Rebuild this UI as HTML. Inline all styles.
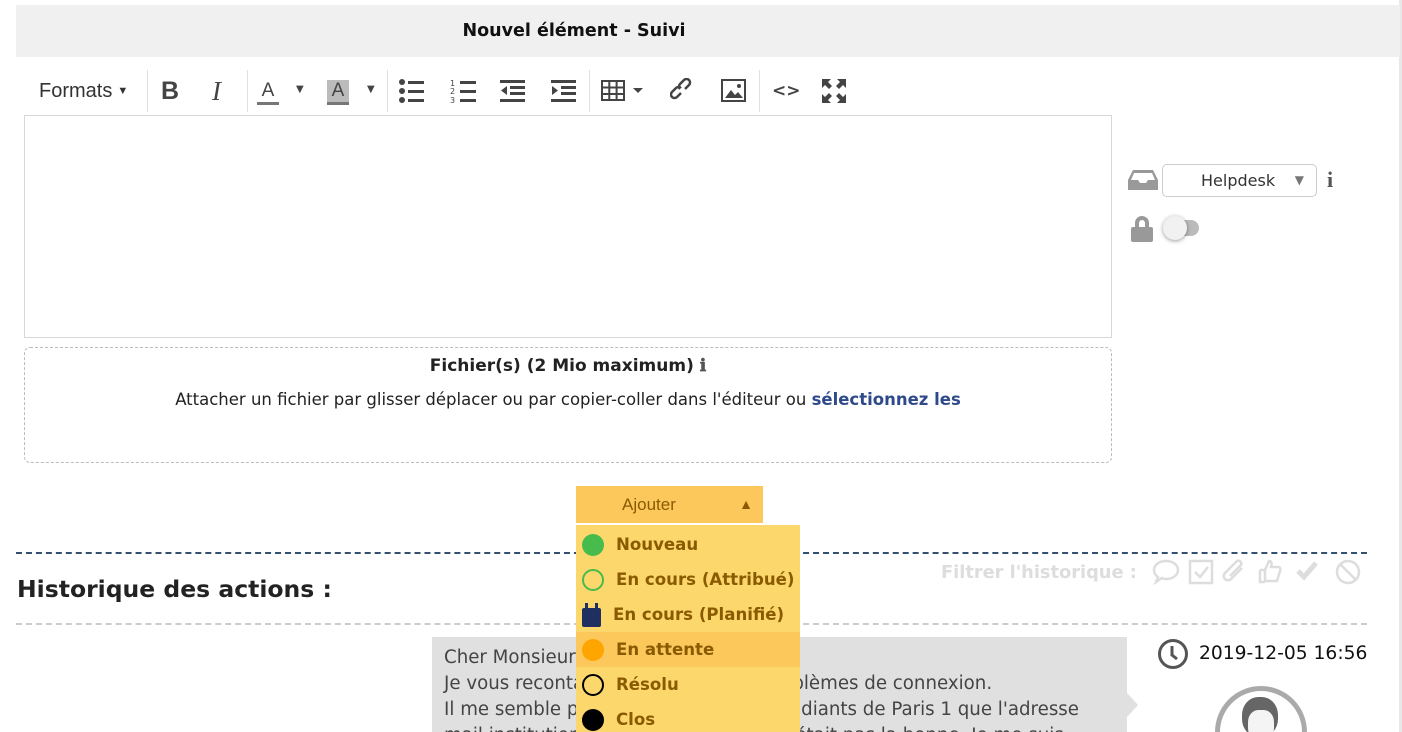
<!DOCTYPE html>
<html><head><meta charset="utf-8"><style>
*{box-sizing:border-box;margin:0;padding:0}
html,body{width:1402px;height:732px;overflow:hidden}
body{background:#fff;font-family:"DejaVu Sans","Liberation Sans",sans-serif;color:#222}
#w{position:relative;width:1402px;height:732px;overflow:hidden}
.a{position:absolute}
.tb{top:70px;height:42px;display:flex;align-items:center;color:#444}
.sep{position:absolute;top:70px;width:1px;height:42px;background:#e0e0e0}
.dd li{list-style:none;height:35px;display:flex;align-items:center;padding-left:6px;font-weight:bold;font-size:16.6px;color:#8a5a00;white-space:nowrap}
.dot{width:22px;height:22px;border-radius:50%;margin-right:12px;flex:none}
</style></head><body><div id="w">
<div class="a" style="left:1399px;top:0;width:3px;height:732px;background:#e8e8e8"></div>
<div class="a" style="left:16px;top:5px;width:1384px;height:52px;background:#f0f0f0;text-align:center;line-height:52px;font-weight:bold;font-size:17.5px;color:#111;padding-right:268px">Nouvel élément - Suivi</div>

<div class="a tb" style="left:39px;font-family:'Liberation Sans',sans-serif;font-size:20px;color:#333">Formats <span style="font-size:11px;margin-left:5px">▼</span></div>
<div class="sep" style="left:147px"></div>
<div class="a tb" style="left:161px;font-family:'Liberation Sans';font-weight:bold;font-size:25px">B</div>
<div class="a tb" style="left:212px;font-family:'Liberation Serif';font-style:italic;font-size:27px">I</div>
<div class="sep" style="left:247px"></div>
<div class="a" style="left:257px;top:80px;font-family:'Liberation Sans';font-size:19px;color:#444;border-bottom:3px solid #777;width:22px;text-align:center;line-height:22px">A</div>
<div class="a" style="left:296px;top:84px;font-size:10px;color:#444">▼</div>
<div class="a" style="left:327px;top:80px;font-family:'Liberation Sans';font-size:19px;color:#444;background:#bbb;border-bottom:3px solid #777;width:22px;text-align:center;line-height:22px">A</div>
<div class="a" style="left:367px;top:84px;font-size:10px;color:#444">▼</div>
<div class="sep" style="left:387px"></div>
<svg class="a" style="left:398px;top:78px" width="28" height="26" fill="#444"><circle cx="4" cy="4" r="3"/><circle cx="4" cy="13" r="3"/><circle cx="4" cy="22" r="3"/><rect x="10" y="3" width="16" height="3"/><rect x="10" y="12" width="16" height="3"/><rect x="10" y="21" width="16" height="3"/></svg>
<svg class="a" style="left:450px;top:78px" width="28" height="26" fill="#444"><text x="0" y="8" font-size="8">1</text><text x="0" y="16" font-size="8">2</text><text x="0" y="25" font-size="8">3</text><rect x="10" y="3" width="16" height="3"/><rect x="10" y="12" width="16" height="3"/><rect x="10" y="21" width="16" height="3"/></svg>
<svg class="a" style="left:500px;top:78px" width="26" height="26" fill="#444"><rect x="0" y="2" width="25" height="3"/><rect x="10" y="8" width="15" height="3"/><rect x="10" y="14" width="15" height="3"/><rect x="0" y="21" width="25" height="3"/><path d="M7 8v9l-6-4.5z"/></svg>
<svg class="a" style="left:551px;top:78px" width="26" height="26" fill="#444"><rect x="0" y="2" width="25" height="3"/><rect x="10" y="8" width="15" height="3"/><rect x="10" y="14" width="15" height="3"/><rect x="0" y="21" width="25" height="3"/><path d="M1 8v9l6-4.5z"/></svg>
<div class="sep" style="left:589px"></div>
<svg class="a" style="left:601px;top:80px" width="44" height="22" fill="none" stroke="#444" stroke-width="2"><rect x="1" y="1" width="22" height="19"/><path d="M1 7.5h22M1 14h22M8.3 1v19M15.6 1v19"/><path d="M32 8h10l-5 5z" fill="#444" stroke="none"/></svg>
<svg class="a" style="left:670px;top:78px" width="26" height="26" fill="none" stroke="#444" stroke-width="2.5"><path d="M11 15l-4 4a3.5 3.5 0 0 1-5-5l4-4a3.5 3.5 0 0 1 5 0"/><path d="M15 11l4-4a3.5 3.5 0 0 0-5-5l-4 4a3.5 3.5 0 0 0 0 5"/></svg>
<svg class="a" style="left:721px;top:79px" width="26" height="24"><rect x="1" y="1" width="23" height="21" fill="none" stroke="#444" stroke-width="2"/><path d="M4 19l6-8 4 5 3-3 5 6z" fill="#444"/><circle cx="18" cy="7" r="2" fill="#444"/></svg>
<div class="sep" style="left:759px"></div>
<div class="a tb" style="left:772px;font-size:17px;font-weight:bold;color:#444">&lt;&gt;</div>
<svg class="a" style="left:821px;top:78px" width="26" height="26" fill="#444"><path d="M1 1h9l-3 3 4 4-3 3-4-4-3 3zM25 1v9l-3-3-4 4-3-3 4-4-3-3zM1 25v-9l3 3 4-4 3 3-4 4 3 3zM25 25h-9l3-3-4-4 3-3 4 4 3-3z"/></svg>

<div class="a" style="left:24px;top:115px;width:1088px;height:223px;border:1px solid #d8d8d8"></div>
<div class="a" style="left:24px;top:347px;width:1088px;height:116px;border:1px dashed #bbb;border-radius:6px;text-align:center;font-size:16.5px;color:#222;white-space:nowrap">
<div style="margin-top:8px;font-weight:bold;font-size:17px">Fichier(s) (2 Mio maximum) <span style="color:#555;font-family:'Liberation Serif'">ℹ</span></div>
<div style="margin-top:14px">Attacher un fichier par glisser déplacer ou par copier-coller dans l'éditeur ou <b style="color:#2f4a8a">sélectionnez les</b></div></div>

<svg class="a" style="left:1128px;top:169px" width="30" height="22" fill="#999"><path d="M5 1h20l5 10v10H0V11z"/><path d="M6 4h18l3 7h-7l-2 3h-6l-2-3H3z" fill="#fff"/></svg>
<div class="a" style="left:1162px;top:164px;width:155px;height:33px;border:1px solid #ccc;border-radius:5px;font-size:16px;line-height:31px;padding-left:38px;color:#333">Helpdesk<span style="position:absolute;right:12px;color:#777;font-size:12px">▼</span></div>
<div class="a" style="left:1327px;top:167px;font-family:'Liberation Serif';font-weight:bold;font-size:22px;color:#555">i</div>
<svg class="a" style="left:1130px;top:215px" width="24" height="28" fill="#999"><path d="M5 12V8a7 7 0 0 1 14 0v4h-4V8a3 3 0 0 0-6 0v4z"/><rect x="1" y="12" width="22" height="15" rx="2"/></svg>
<div class="a" style="left:1166px;top:220px;width:33px;height:16px;border-radius:8px;background:#bbb"></div>
<div class="a" style="left:1163px;top:216px;width:24px;height:24px;border-radius:50%;background:#f1f1f1;box-shadow:0 1px 4px rgba(0,0,0,.4)"></div>

<div class="a" style="left:16px;top:552px;width:1351px;border-top:2px dashed #34506e"></div>
<div class="a" style="left:17px;top:575px;font-weight:bold;font-size:23.5px;color:#222;white-space:nowrap">Historique des actions :</div>
<div class="a" style="left:941px;top:562px;font-weight:bold;font-size:17.8px;color:#ddd;white-space:nowrap">Filtrer l'historique :</div>
<svg class="a" style="left:1152px;top:558px" width="210" height="28" fill="none" stroke="#ddd" stroke-width="2.5"><path d="M14 3c7 0 12 4 12 9s-5 9-12 9c-2 0-3 0-4-1l-6 4 2-5c-3-2-4-4-4-7 0-5 5-9 12-9z"/><rect x="38" y="3" width="22" height="22"/><path d="M43 14l5 5 8-10"/><path d="M90 10l-11 11a4 4 0 0 1-6-6l12-12a3 3 0 0 1 4 4l-11 11"/><path d="M108 12h5l4-9c3 0 3 3 2 6h7c2 0 3 2 2 4l-3 10h-12v-11zM108 12v12h5"/><path d="M146 13l6 6 12-14" stroke-width="5"/><circle cx="196" cy="14" r="11"/><path d="M188 6l16 16"/></svg>
<div class="a" style="left:16px;top:623px;width:1351px;border-top:2px dashed #ccc"></div>

<div class="a" style="left:432px;top:637px;width:695px;height:95px;background:#e0e0e0;font-size:18.2px;line-height:26px;color:#444;padding:8px 12px;white-space:nowrap;overflow:hidden">Cher Monsieur,<br>Je vous recontacte au sujet de vos problèmes de connexion.<br>Il me semble pourtant avoir dit aux étudiants de Paris 1 que l'adresse<br>mail institutionnelle qu'ils utilisaient n'était pas la bonne. Je me suis</div>
<div class="a" style="left:1127px;top:693px;width:0;height:0;border-top:12px solid transparent;border-bottom:12px solid transparent;border-left:11px solid #e0e0e0"></div>
<svg class="a" style="left:1157px;top:638px" width="32" height="32" fill="none" stroke="#555" stroke-width="3"><circle cx="16" cy="16" r="13.5"/><path d="M15 8v9l5 4"/></svg>
<div class="a" style="left:1199px;top:643px;font-size:18.7px;color:#111;white-space:nowrap">2019-12-05 16:56</div>
<div class="a" style="left:1215px;top:686px;width:92px;height:46px;overflow:hidden">
<div style="position:absolute;left:0;top:0;width:92px;height:92px;border-radius:50%;border:5px solid #aaa"></div>
<div style="position:absolute;left:27px;top:11px;width:36px;height:40px;border-radius:45%;background:#666"></div>
<div style="position:absolute;left:33px;top:24px;width:26px;height:30px;border-radius:40%;background:#f4f4f4"></div>
</div>

<div class="a" style="left:576px;top:486px;width:187px;height:37px;background:#fcc85c;color:#8a5a00;font-family:'Liberation Sans',sans-serif;font-size:17px;line-height:37px;padding-left:46px">Ajouter<span style="position:absolute;right:10px;font-size:14px">▲</span></div>
<ul class="a dd" style="left:576px;top:525px;width:224px;height:207px;background:#fcd86c;padding-top:2px;overflow:hidden">
<li><span class="dot" style="background:#47bb4b"></span>Nouveau</li>
<li><span class="dot" style="border:2px solid #47bb4b"></span>En cours (Attribué)</li>
<li><svg width="20" height="24" style="margin-right:11px;flex:none"><rect x="0" y="5" width="19" height="19" rx="2" fill="#1f2f5f"/><rect x="3" y="0" width="3" height="6" fill="#1f2f5f"/><rect x="13" y="0" width="3" height="6" fill="#1f2f5f"/></svg>En cours (Planifié)</li>
<li style="background:#fcc85c"><span class="dot" style="background:#ffa500"></span>En attente</li>
<li><span class="dot" style="border:2px solid #000"></span>Résolu</li>
<li><span class="dot" style="background:#000"></span>Clos</li>
</ul>
</div></body></html>
